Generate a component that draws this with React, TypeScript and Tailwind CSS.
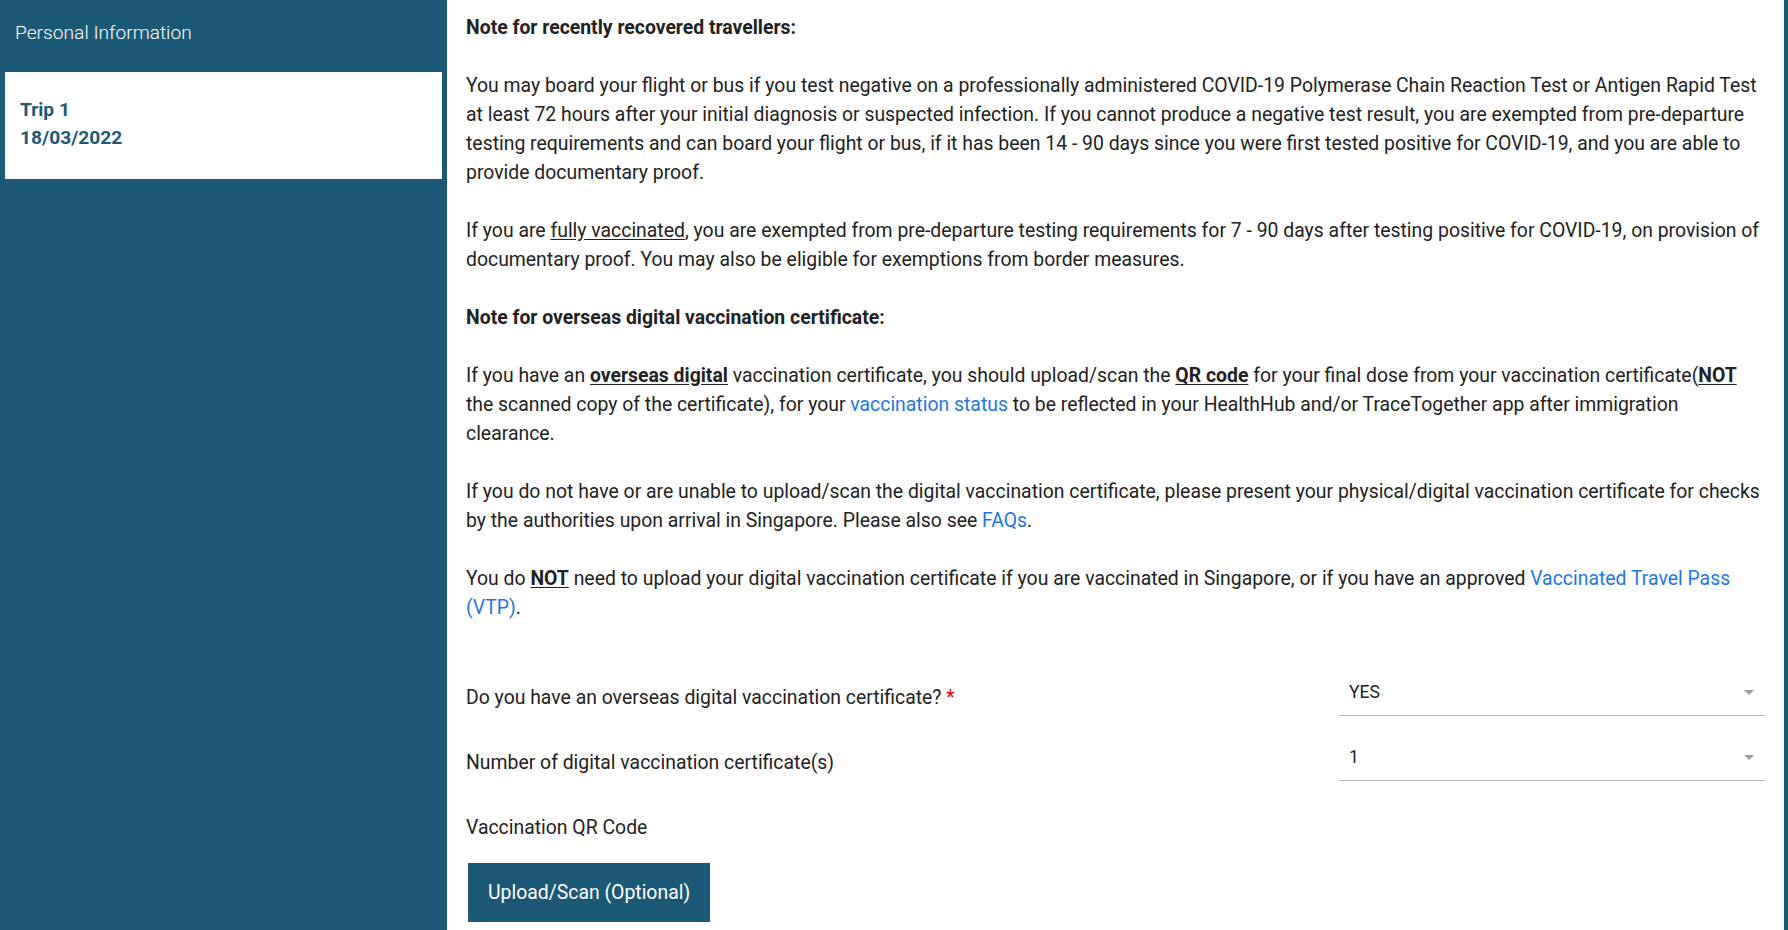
import type { ReactNode } from "react";

const Link = ({ children }: { children: ReactNode }) => (
  <a className="text-[#1f76e6]">{children}</a>
);

const Strong = ({ children }: { children: ReactNode }) => (
  <span className="font-bold underline underline-offset-2">{children}</span>
);

function Select({ value }: { value: string }) {
  return (
    <div className="flex h-[46px] w-[426px] items-center justify-between border-b border-[#b5b5b5] pl-[10px] pr-[11px] text-[17.5px] text-[#222]">
      <span>{value}</span>
      <svg width="10" height="5" viewBox="0 0 10 5" aria-hidden="true">
        <path d="M0 0h10L5 5z" fill="#9e9e9e" />
      </svg>
    </div>
  );
}

export default function App() {
  return (
    <div
      className="flex h-[930px] w-full overflow-hidden bg-[#1b5977]"
      style={{ fontFamily: "Roboto, 'Noto Sans', sans-serif" }}
    >
      {/* ================= SIDEBAR ================= */}
      <aside className="flex w-[447px] shrink-0 flex-col">
        <div className="h-[72px] px-[15px] pt-[18px] text-[19.2px] leading-[29px] font-light text-white">
          Personal Information
        </div>
        <div className="mx-[5px] w-[437px] bg-white px-[15px] pt-[24px] pb-[27px] text-[19.2px] leading-[28px] font-bold text-[#1b5977]">
          <div>Trip 1</div>
          <div>18/03/2022</div>
        </div>
      </aside>

      {/* ================= MAIN ================= */}
      <main className="flex-1 bg-white px-[19px] pt-[13px] text-[19.4px] leading-[29px] text-[#222]">
        <div className="flex flex-col gap-[29px]">
          <p className="font-bold">Note for recently recovered travellers:</p>

          <p>
            You may board your flight or bus if you test negative on a professionally administered COVID-19
            Polymerase Chain Reaction Test or Antigen Rapid Test at least 72 hours after your initial diagnosis or
            suspected infection. If you cannot produce a negative test result, you are exempted from pre-departure
            testing requirements and can board your flight or bus, if it has been 14 - 90 days since you were first
            tested positive for COVID-19, and you are able to provide documentary proof.
          </p>

          <p>
            If you are <span className="underline underline-offset-2">fully vaccinated</span>, you are exempted from
            pre-departure testing requirements for 7 - 90 days after testing positive for COVID-19, on provision of
            documentary proof. You may also be eligible for exemptions from border measures.
          </p>

          <p className="font-bold">Note for overseas digital vaccination certificate:</p>

          <p>
            If you have an <Strong>overseas digital</Strong> vaccination certificate, you should upload/scan the{" "}
            <Strong>QR code</Strong> for your final dose from your vaccination certificate(<Strong>NOT</Strong> the
            scanned copy of the certificate), for your <Link>vaccination status</Link> to be reflected in your
            HealthHub and/or TraceTogether app after immigration clearance.
          </p>

          <p>
            If you do not have or are unable to upload/scan the digital vaccination certificate, please present your
            physical/digital vaccination certificate for checks by the authorities upon arrival in Singapore. Please
            also see <Link>FAQs</Link>.
          </p>

          <p>
            You do <Strong>NOT</Strong> need to upload your digital vaccination certificate if you are vaccinated in
            Singapore, or if you have an approved <Link>Vaccinated Travel Pass (VTP)</Link>.
          </p>
        </div>

        {/* ================= FORM ================= */}
        <div className="mt-[48px] flex flex-col gap-[19px]">
          <div className="flex items-end justify-between">
            <label className="mb-[4px]">
              Do you have an overseas digital vaccination certificate? <span className="text-[#e00000]">*</span>
            </label>
            <Select value="YES" />
          </div>

          <div className="flex items-end justify-between">
            <label className="mb-[4px]">Number of digital vaccination certificate(s)</label>
            <Select value="1" />
          </div>
        </div>

        <div className="mt-[32px]">Vaccination QR Code</div>

        <button
          type="button"
          className="mt-[21px] ml-[2px] h-[59px] bg-[#1b5977] px-[20px] text-[19.4px] font-normal text-white"
        >
          Upload/Scan (Optional)
        </button>
      </main>

      {/* right edge strip */}
      <div className="w-[4px] shrink-0" />
    </div>
  );
}
